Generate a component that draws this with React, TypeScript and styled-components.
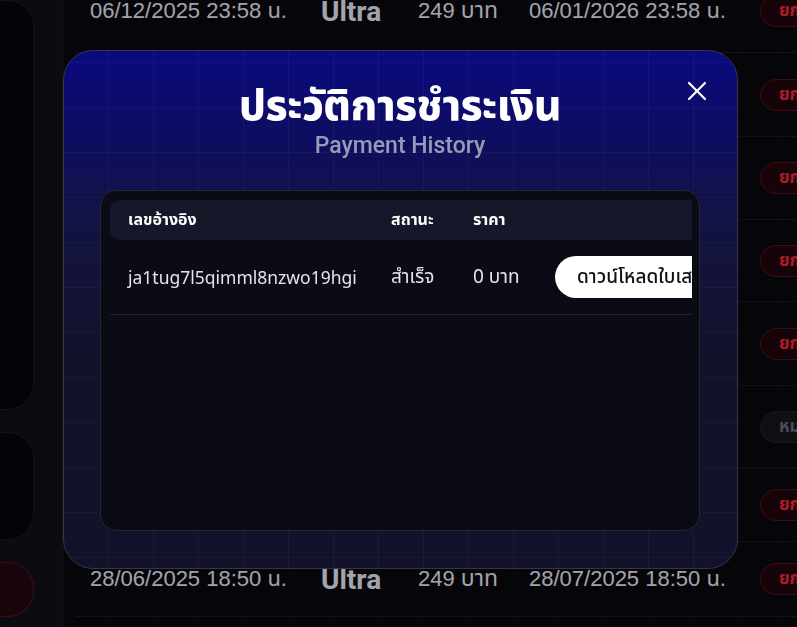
import styled, { createGlobalStyle } from "styled-components";
import { X } from "lucide-react";

const GlobalStyle = createGlobalStyle`
  * { box-sizing: border-box; }
  html, body { margin: 0; padding: 0; height: 100%; overflow: hidden; }
  body {
    background: #08080f;
    font-family: "Noto Sans Thai", "Noto Sans", "Liberation Sans", sans-serif;
  }
`;

const Page = styled.div`
  display: flex;
  height: 100vh;
  background-image:
    linear-gradient(rgba(255, 255, 255, 0.02) 1px, transparent 1px),
    linear-gradient(90deg, rgba(255, 255, 255, 0.02) 1px, transparent 1px);
  background-size: 45px 45px;
  background-position: 18px 17px;
`;

const Sidebar = styled.aside`
  width: 63px;
  flex-shrink: 0;
  background: #111119;
  border-right: 1px solid #1c1c26;
  display: flex;
  flex-direction: column;
  gap: 22px;
`;

const SideCard = styled.div<{ $h: number; $danger?: boolean }>`
  width: 34px;
  height: ${(p) => p.$h}px;
  flex-shrink: 0;
  border-radius: 0 26px 26px 0;
  border: 1px solid ${(p) => (p.$danger ? "#5a1422" : "#1a1a24")};
  border-left: none;
  background: ${(p) => (p.$danger ? "#240914" : "#07070c")};
`;

const Main = styled.main`
  flex: 1;
  overflow: hidden;
  padding-left: 12px;
`;

const List = styled.div`
  margin-top: -30px;
`;

const Row = styled.div<{ $h: number }>`
  display: grid;
  grid-template-columns: 231px 97px 111px 231px auto;
  align-items: center;
  height: ${(p) => p.$h}px;
  padding-left: 15px;
  border-bottom: 1px solid #1a1a24;
  color: #eaeaf4;
  font-family: "Liberation Sans", "Noto Sans Thai", sans-serif;
  font-size: 22px;
  white-space: nowrap;
`;

const Baht = styled.span`
  font-size: 22px;
  & > em {
    font-style: normal;
    font-size: 23px;
  }
`;

const Plan = styled.span`
  font-family: "Roboto", "Liberation Sans", sans-serif;
  font-weight: 700;
  font-size: 28px;
`;

const Status = styled.span<{ $tone: "red" | "gray" }>`
  display: inline-flex;
  align-items: center;
  height: 32px;
  padding: 0 18px;
  border-radius: 16px;
  font-size: 17px;
  font-weight: 700;
  font-family: "Noto Sans Thai", "Noto Sans", sans-serif;
  justify-self: start;
  background: ${(p) => (p.$tone === "red" ? "#22070c" : "#17171e")};
  border: 1px solid ${(p) => (p.$tone === "red" ? "#581421" : "#22222c")};
  color: ${(p) => (p.$tone === "red" ? "#f42a3a" : "#6c6c80")};
`;

const Overlay = styled.div`
  position: fixed;
  inset: 0;
  background: rgba(0, 0, 0, 0.3);
  display: flex;
  justify-content: center;
  align-items: flex-start;
  padding-top: 50px;
  padding-left: 4px;
`;

const Modal = styled.div`
  position: relative;
  width: 675px;
  height: 519px;
  border-radius: 30px;
  border: 1px solid #34344a;
  padding: 31px 37px 37px 36px;
  display: flex;
  flex-direction: column;
  align-items: center;
  background-color: #12122a;
  background-image:
    linear-gradient(rgba(255, 255, 255, 0.035) 1px, transparent 1px),
    linear-gradient(90deg, rgba(255, 255, 255, 0.035) 1px, transparent 1px),
    linear-gradient(180deg, #0a0a7e 0%, #0d0d66 14%, #121248 30%, #13133a 42%, #12122c 58%, #12122a 100%);
  background-size: 45px 45px, 45px 45px, 100% 100%;
  background-position: 44px 56px, 44px 56px, 0 0;
  overflow: hidden;
`;

const CloseButton = styled.button`
  position: absolute;
  top: 24px;
  right: 24px;
  width: 32px;
  height: 32px;
  padding: 0;
  border: none;
  background: transparent;
  color: #ffffff;
  display: flex;
  align-items: center;
  justify-content: center;
  cursor: pointer;
`;

const Title = styled.h2`
  margin: 0;
  font-size: 42px;
  line-height: 50px;
  font-weight: 800;
  color: #ffffff;
  letter-spacing: -0.5px;
`;

const Subtitle = styled.p`
  margin: 1px 0 0;
  font-family: "Roboto", "Liberation Sans", sans-serif;
  font-size: 23px;
  line-height: 26px;
  font-weight: 500;
  color: #9a9ab8;
`;

const Panel = styled.div`
  margin-top: 31px;
  align-self: stretch;
  flex: 1;
  border-radius: 16px;
  border: 1px solid #26263a;
  background: #0b0b15;
  padding: 9px 7px 9px 9px;
`;

const TableScroll = styled.div`
  overflow: hidden;
  width: 100%;
`;

const TableRow = styled.div<{ $head?: boolean }>`
  display: grid;
  grid-template-columns: 263px 82px 82px 230px;
  width: 657px;
  align-items: center;
  height: ${(p) => (p.$head ? 40 : 75)}px;
  background: ${(p) => (p.$head ? "#17172a" : "transparent")};
  border-radius: ${(p) => (p.$head ? "10px" : "0")};
  border-bottom: ${(p) => (p.$head ? "none" : "1px solid #20202e")};
  color: ${(p) => (p.$head ? "#ffffff" : "#e4e4ee")};
  font-size: ${(p) => (p.$head ? 16 : 19)}px;
  font-weight: ${(p) => (p.$head ? 700 : 400)};
  white-space: nowrap;
`;

const Cell = styled.div`
  padding-left: 18px;
`;

const RefCell = styled(Cell)`
  font-family: "Noto Sans", "Liberation Sans", sans-serif;
  font-size: 17.5px;
`;

const DownloadButton = styled.button`
  height: 42px;
  padding: 0 22px;
  border: none;
  border-radius: 21px;
  background: #ffffff;
  color: #111118;
  font-family: inherit;
  font-size: 19px;
  font-weight: 500;
  white-space: nowrap;
  cursor: pointer;
`;

const rows = [
  { h: 83, start: "06/12/2025 23:58 น.", end: "06/01/2026 23:58 น.", status: "ยกเลิก", tone: "red" as const },
  { h: 84, start: "06/11/2025 23:58 น.", end: "06/12/2025 23:58 น.", status: "ยกเลิก", tone: "red" as const },
  { h: 83, start: "06/10/2025 23:58 น.", end: "06/11/2025 23:58 น.", status: "ยกเลิก", tone: "red" as const },
  { h: 82, start: "06/09/2025 23:58 น.", end: "06/10/2025 23:58 น.", status: "ยกเลิก", tone: "red" as const },
  { h: 84, start: "06/08/2025 23:58 น.", end: "06/09/2025 23:58 น.", status: "ยกเลิก", tone: "red" as const },
  { h: 83, start: "28/07/2025 18:50 น.", end: "28/08/2025 18:50 น.", status: "หมดอายุ", tone: "gray" as const },
  { h: 73, start: "28/07/2025 18:50 น.", end: "28/08/2025 18:50 น.", status: "ยกเลิก", tone: "red" as const },
  { h: 75, start: "28/06/2025 18:50 น.", end: "28/07/2025 18:50 น.", status: "ยกเลิก", tone: "red" as const },
];

const App = () => {
  return (
    <>
      <GlobalStyle />
      <Page>
        <Sidebar>
          <SideCard $h={410} />
          <SideCard $h={108} />
          <SideCard $h={55} $danger />
        </Sidebar>
        <Main>
          <List>
            {rows.map((r, i) => (
              <Row key={i} $h={r.h}>
                <span>{r.start}</span>
                <Plan>Ultra</Plan>
                <Baht>
                  249 <em>บาท</em>
                </Baht>
                <span>{r.end}</span>
                <Status $tone={r.tone}>{r.status}</Status>
              </Row>
            ))}
          </List>
        </Main>
      </Page>
      <Overlay>
        <Modal>
          <CloseButton aria-label="close">
            <X size={32} strokeWidth={1.6} />
          </CloseButton>
          <Title>ประวัติการชำระเงิน</Title>
          <Subtitle>Payment History</Subtitle>
          <Panel>
            <TableScroll>
              <TableRow $head>
                <Cell>เลขอ้างอิง</Cell>
                <Cell>สถานะ</Cell>
                <Cell>ราคา</Cell>
                <Cell />
              </TableRow>
              <TableRow>
                <RefCell>ja1tug7l5qimml8nzwo19hgi</RefCell>
                <Cell>สำเร็จ</Cell>
                <Cell>0 บาท</Cell>
                <Cell>
                  <DownloadButton>ดาวน์โหลดใบเสร็จ</DownloadButton>
                </Cell>
              </TableRow>
            </TableScroll>
          </Panel>
        </Modal>
      </Overlay>
    </>
  );
};

export default App;
